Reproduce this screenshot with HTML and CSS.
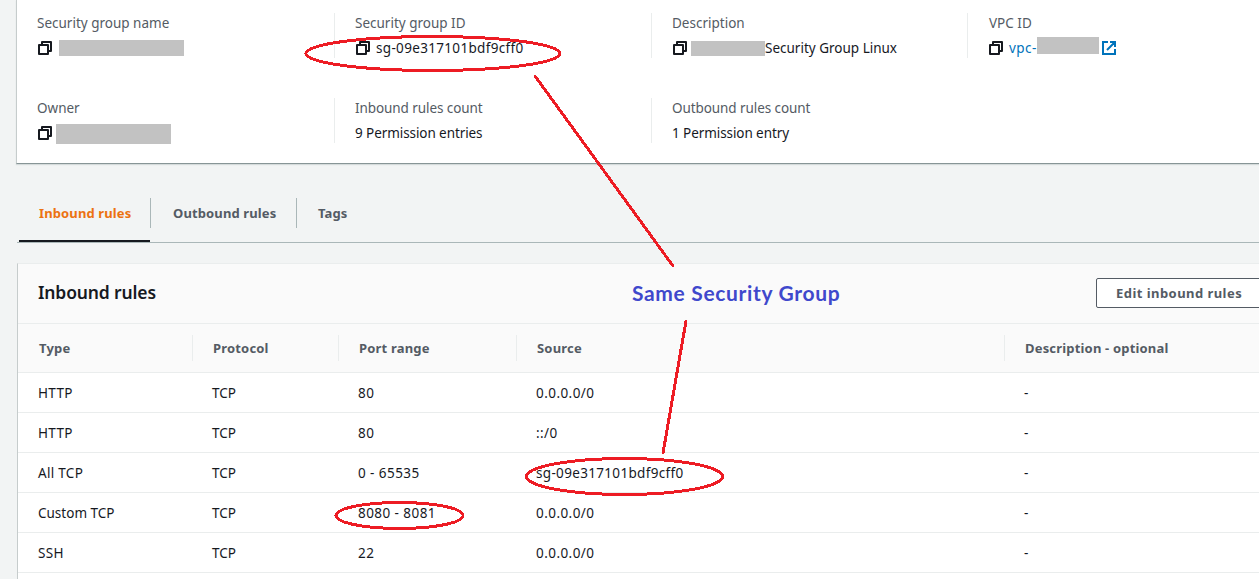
FILE: index.html
```html
<!DOCTYPE html>
<html lang="en">
<head>
<meta charset="utf-8">
<title>Security group</title>
<link rel="stylesheet" href="styles.css">
</head>
<body>
<svg class="defs" width="0" height="0" aria-hidden="true">
  <symbol id="copy" viewBox="0 0 14 14"><path d="M1 4h9v9H1zM4 3V1h9v9h-3" fill="none" stroke="currentColor" stroke-width="2" stroke-linejoin="round"/></symbol>
  <symbol id="external" viewBox="0 0 14 14"><path d="M6 1H1v12h12V8M8 1h5v5M13 1L5 9" fill="none" stroke="currentColor" stroke-width="2"/></symbol>
</svg>
<main class="page">
  <section class="summary">
    <div class="field">
      <div class="label">Security group name</div>
      <div class="value"><svg class="icon"><use href="#copy"/></svg><span class="mask mask-name"></span></div>
    </div>
    <div class="field divided">
      <div class="label">Security group ID</div>
      <div class="value"><svg class="icon"><use href="#copy"/></svg><span class="sg-id">sg-09e317101bdf9cff0</span></div>
    </div>
    <div class="field divided">
      <div class="label">Description</div>
      <div class="value"><svg class="icon"><use href="#copy"/></svg><span class="mask mask-desc"></span><span>Security Group Linux</span></div>
    </div>
    <div class="field divided">
      <div class="label vpc-label">VPC ID</div>
      <div class="value"><svg class="icon"><use href="#copy"/></svg><a class="link">vpc-</a><span class="mask mask-vpc"></span><svg class="icon external"><use href="#external"/></svg></div>
    </div>
    <div class="field">
      <div class="label">Owner</div>
      <div class="value"><svg class="icon"><use href="#copy"/></svg><span class="mask mask-owner"></span></div>
    </div>
    <div class="field divided count">
      <div class="label">Inbound rules count</div>
      <div class="value"><span>9 Permission entries</span></div>
    </div>
    <div class="field divided count">
      <div class="label">Outbound rules count</div>
      <div class="value"><span>1 Permission entry</span></div>
    </div>
  </section>

  <nav class="tabs">
    <div class="tab active"><span>Inbound rules</span></div>
    <div class="tab"><span>Outbound rules</span></div>
    <div class="tab"><span>Tags</span></div>
  </nav>

  <section class="rules">
    <header class="rules-head">
      <h2 class="title">Inbound rules</h2>
      <button class="edit">Edit inbound rules</button>
    </header>
    <div class="row head"><div>Type</div><div>Protocol</div><div>Port range</div><div>Source</div><div>Description - optional</div></div>
    <div class="row"><div class="caps">HTTP</div><div>TCP</div><div class="num">80</div><div class="num">0.0.0.0/0</div><div>-</div></div>
    <div class="row"><div class="caps">HTTP</div><div>TCP</div><div class="num">80</div><div class="num">::/0</div><div>-</div></div>
    <div class="row"><div class="caps">All TCP</div><div>TCP</div><div class="num">0 - 65535</div><div><span class="sg-id">sg-09e317101bdf9cff0</span></div><div>-</div></div>
    <div class="row"><div>Custom TCP</div><div>TCP</div><div class="num">8080 - 8081</div><div class="num">0.0.0.0/0</div><div>-</div></div>
    <div class="row"><div class="caps">SSH</div><div>TCP</div><div class="num">22</div><div class="num">0.0.0.0/0</div><div>-</div></div>
    <div class="row"></div>
  </section>

  <svg class="notes" viewBox="0 0 1259 579">
    <g fill="none" stroke="#ed1c24" stroke-width="3" stroke-linecap="round" shape-rendering="crispEdges">
      <ellipse cx="433" cy="53.5" rx="127" ry="17"/>
      <ellipse cx="624.5" cy="476.5" rx="98" ry="18"/>
      <ellipse cx="399.500" cy="515.500" rx="63.500" ry="13"/>
      <path d="M535 76L673 266M686 321L663 453"/>
    </g>
    <text class="note" x="632" y="301">Same Security Group</text>
  </svg>
</main>
</body>
</html>
```
FILE: styles.css
```css
* { box-sizing: border-box; }
body {
  margin: 0;
  background: #f2f4f4;
  color: #16191f;
  font: 13.5px/20px "Noto Sans", "Open Sans", sans-serif;
}
.defs { display: block; height: 0; }
.page { position: relative; width: 1259px; height: 579px; overflow: hidden; }

.summary {
  display: grid;
  grid-template-columns: 316px 317px 316px 1fr;
  grid-auto-rows: 45px;
  row-gap: 40px;
  height: 164px;
  margin-left: 16px;
  padding: 13px 0 0 1px;
  background: #fff;
  border-left: 1px solid #c6cccc;
  border-bottom: 1px solid #879596;
  box-shadow: 0 1px 1px #d5dbdb;
}
.field { padding-left: 19px; border-left: 1px solid transparent; }
.divided { padding-left: 20px; border-left-color: #eaeded; }
.summary .field:nth-child(4n+1) { padding-left: 18px; }
.count { letter-spacing: -0.08px; }
.label { color: #545b64; }
.vpc-label { padding-left: 1px; }
.value { display: flex; align-items: center; height: 20px; margin-top: 5px; white-space: nowrap; }
.icon { width: 14px; height: 14px; margin: 0 6px 0 1px; flex: none; }
.mask { background: #c2c2c2; flex: none; }
.mask-name { width: 125px; height: 16px; margin-left: 1px; }
.mask-desc { width: 74px; height: 15px; margin-left: -2px; }
.mask-owner { width: 115px; height: 20px; margin: 2px 0 0 -2px; }
.mask-vpc { width: 62px; height: 17px; margin-top: -5px; }
.link, .external { color: #0073bb; }
.link { letter-spacing: 0.45px; }
.external { margin-left: 3px; }
.sg-id { letter-spacing: 0.33px; }

.tabs {
  display: flex;
  align-items: flex-start;
  height: 46px;
  margin: 33px 0 0 17px;
  border-bottom: 1px solid #aab7b8;
}
.tab {
  height: 45px;
  padding: 1px 20px 0 22px;
  color: #545b64;
  font-weight: 700;
  font-size: 13px;
  line-height: 30px;
  letter-spacing: 0.12px;
  white-space: nowrap;
  background: linear-gradient(#aab7b8, #aab7b8) right 1px / 1px 30px no-repeat;
}
.tab:nth-child(1) { width: 134px; }
.tab:nth-child(2) { width: 146px; }
.tab:nth-child(3) { background: none; padding-left: 21px; }
.tab.active { color: #ec7211; }
.tab.active::after { content: ""; display: block; width: 131px; height: 2px; margin: 12px 0 0 -20px; background: #16191f; }

.rules { margin: 20px 0 0 17px; background: #fff; border-left: 1px solid #c6cccc; border-top: 1px solid #eaeded; }
.rules-head {
  display: flex;
  justify-content: space-between;
  height: 60px;
  padding: 14px 0 0 20px;
  background: #fafafa;
  border-bottom: 1px solid #eaeded;
}
.title { margin: 0; font-size: 17.5px; line-height: 29px; font-weight: 600; letter-spacing: -0.15px; }
.edit {
  width: 184px;
  height: 30px;
  margin-right: -21px;
  padding: 0 0 0 19px;
  text-align: left;
  color: #545b64;
  background: #fff;
  border: 1px solid #545b64;
  border-radius: 2px;
  font: 700 13px/28px "Noto Sans", sans-serif;
  letter-spacing: 0.45px;
  white-space: nowrap;
}
.row {
  display: grid;
  grid-template-columns: 174px 146px 178px 488px 1fr;
  height: 40px;
  border-bottom: 1px solid #eaeded;
}
.row > div { padding-left: 20px; line-height: 40px; }
.num { letter-spacing: 0.44px; }
.caps { letter-spacing: 0.3px; }
.row.head { height: 49px; align-items: center; background: #fafafa; color: #545b64; font-weight: 700; font-size: 13px; letter-spacing: 0.18px; }
.row.head > div { padding-left: 21px; line-height: 26px; border-right: 1px solid #eaeded; margin-right: -1px; }
.row.head > div:last-child { border-right: 0; }

.notes { position: absolute; left: 0; top: 0; width: 1259px; height: 579px; }
.note { font: 700 21px Lato, sans-serif; letter-spacing: 0.66px; fill: #3f48cc; }
```
